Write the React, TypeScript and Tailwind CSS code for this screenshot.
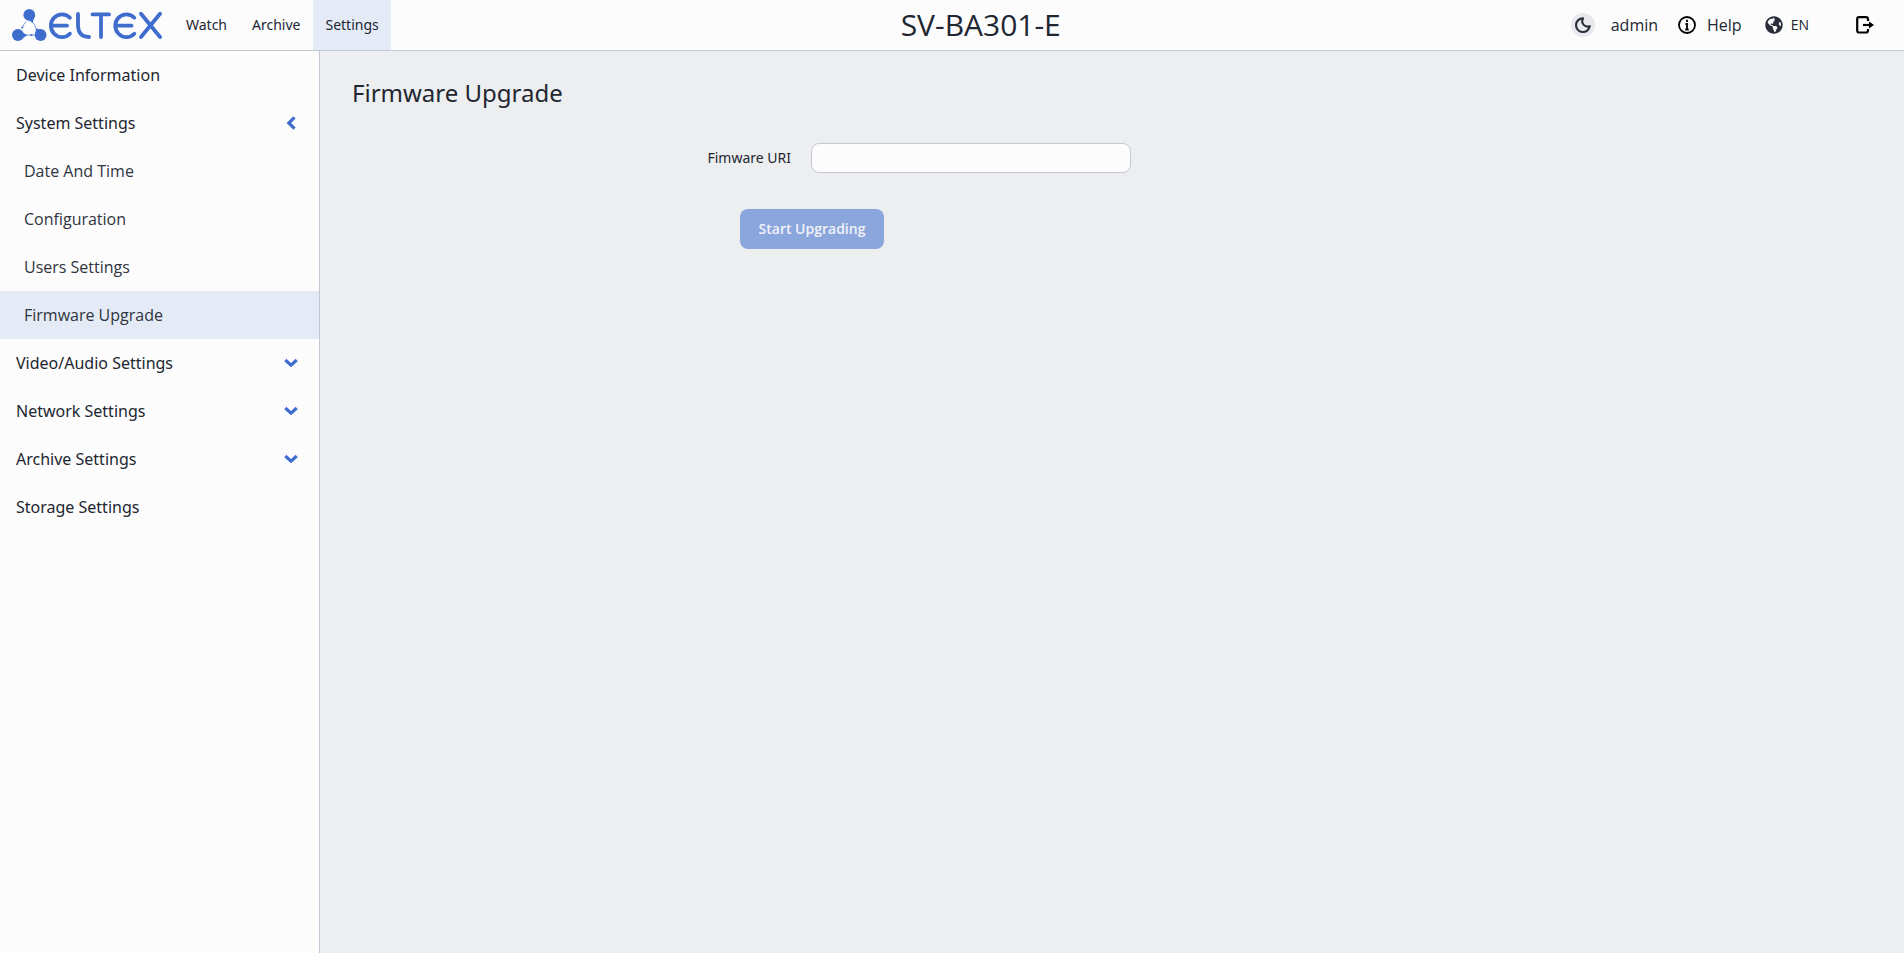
import { useState } from "react";
import { FaGlobeAmericas } from "react-icons/fa";

const topLinks = ["Watch", "Archive", "Settings"];

type Section = { label: string; children?: string[]; collapsible?: boolean };

const sections: Section[] = [
  { label: "Device Information" },
  {
    label: "System Settings",
    collapsible: true,
    children: ["Date And Time", "Configuration", "Users Settings", "Firmware Upgrade"],
  },
  { label: "Video/Audio Settings", collapsible: true },
  { label: "Network Settings", collapsible: true },
  { label: "Archive Settings", collapsible: true },
  { label: "Storage Settings" },
];

function Logo() {
  return (
    <svg width="150" height="32" viewBox="0 0 150 32" fill="none" aria-label="Eltex" role="img">
      <g fill="#3e6dce">
        <circle cx="17.300" cy="5.900" r="5.900" />
        <circle cx="5.900" cy="26" r="5.900" />
        <circle cx="28.600" cy="26" r="5.900" />
        <path d="M14 10.500Q18.500 11.300 20.800 14.300Q20.800 11.500 22.500 8.500Z" />
        <path d="M9.500 21.500Q11.500 25.200 16.500 26Q13 26.800 10 30Z" />
        <path d="M31 20.800Q26.500 21.300 23.600 18.800Q24.500 22.500 23.200 26Z" />
        <circle cx="10.200" cy="18.600" r="1" />
        <circle cx="19.500" cy="26" r="1.100" />
      </g>
      <path d="M14.300 12.500Q11.500 15 10.500 18.500M21.200 13.700Q23 16 23.700 19M16 26H23.500" stroke="#3e6dce" strokeWidth="0.700" />
      <g stroke="#3e6dce" strokeWidth="3.800" strokeLinecap="round" strokeLinejoin="round">
        <path d="M57.900 8.700A11.100 11.400 0 1 0 57.900 24.700M41 16.700H55" />
        <path d="M66 5V17Q66.500 27.800 77 28" />
        <path d="M80.500 5.400H97M89 5.400V28" />
        <path d="M122.300 8.700A11.100 11.400 0 1 0 122.300 24.700M105.500 16.700H119.500" />
        <path d="M129 4.800L148 28M148 4.800L129 28" />
      </g>
    </svg>
  );
}

function MoonIcon() {
  return (
    <svg width="18" height="18" viewBox="0 0 24 24" fill="none" stroke="#2a2e3a" strokeWidth="2.800" strokeLinejoin="round" aria-hidden="true">
      <path d="M12 3A9.200 9.200 0 1 0 21 13.500C15 16 8.500 10 12 3Z" />
    </svg>
  );
}

function InfoIcon() {
  return (
    <svg width="18" height="18" viewBox="0 0 18 18" fill="none" stroke="#000" aria-hidden="true">
      <circle cx="9" cy="9" r="8" strokeWidth="1.800" />
      <path d="M9 3.800V6M7.500 8H9V13.500M7.300 13.500H10.700" strokeWidth="1.800" />
    </svg>
  );
}

function LogoutIcon() {
  return (
    <svg width="18" height="18" viewBox="0 0 18 18" fill="none" stroke="#000" aria-hidden="true">
      <path d="M12 5V3Q12 1.200 10 1.200H3Q1.200 1.200 1.200 3V14.500Q1.200 16.500 3 16.500H10Q12 16.500 12 14.500V13" strokeWidth="2.200" />
      <path d="M7 9H14" strokeWidth="2.200" />
      <path d="M13 5.500L18 9L13 12.500Z" fill="#000" stroke="none" />
    </svg>
  );
}

function Chevron({ open }: { open: boolean }) {
  return (
    <svg width="14" height="14" viewBox="0 0 14 14" fill="none" stroke="#3e6dce" strokeWidth="3.200" aria-hidden="true">
      {open ? <path d="M10.500 1.300L4.800 7L10.500 12.700" /> : <path d="M1.300 4L7 9.200L12.700 4" />}
    </svg>
  );
}

export default function App() {
  const [uri, setUri] = useState("");
  const [openSection, setOpenSection] = useState("System Settings");

  return (
    <div className="flex min-h-screen flex-col bg-[#edeef0] font-['Open_Sans',sans-serif] text-base text-[#212630]">
      <header className="flex h-[51px] justify-between border-b border-[#c4c8d4] bg-[#fcfcfc]">
        <div className="flex items-center pl-3">
          <a href="#home" className="mr-3">
            <Logo />
          </a>
          <nav className="flex gap-px self-stretch font-['Noto_Sans',sans-serif] text-sm">
            {topLinks.map((link) => (
              <a
                key={link}
                href={`#${link.toLowerCase()}`}
                className={link === "Settings" ? "flex items-center bg-[#e4ebf6] px-3" : "flex items-center px-3"}
              >
                {link}
              </a>
            ))}
          </nav>
        </div>
        <div className="flex items-center text-3xl">SV-BA301-E</div>
        <div className="flex items-center pr-[30px]">
          <button type="button" aria-label="Dark theme" className="mr-4 flex size-6 items-center justify-center rounded-full bg-[#e8e9ee]">
            <MoonIcon />
          </button>
          <span className="mr-5">admin</span>
          <a href="#help" className="mr-[23px] flex items-center gap-[11px]">
            <InfoIcon />
            Help
          </a>
          <button type="button" className="mr-[47px] flex items-center gap-2 text-sm">
            <FaGlobeAmericas size={18} color="#2a2e3a" />
            EN
          </button>
          <button type="button" aria-label="Log out">
            <LogoutIcon />
          </button>
        </div>
      </header>
      <div className="flex flex-1">
        <aside className="w-[320px] shrink-0 border-r border-[#c4c8d4] bg-[#fcfcfc]">
          {sections.map((section) => {
            const open = openSection === section.label;
            return (
              <div key={section.label}>
                {section.collapsible ? (
                  <button
                    type="button"
                    aria-expanded={open}
                    onClick={() => setOpenSection(open ? "" : section.label)}
                    className="flex h-12 w-full items-center justify-between pr-[21px] pl-4 font-['Noto_Sans',sans-serif]"
                  >
                    {section.label}
                    <Chevron open={open} />
                  </button>
                ) : (
                  <a href="#section" className="flex h-12 items-center px-4 font-['Noto_Sans',sans-serif]">
                    {section.label}
                  </a>
                )}
                {open &&
                  section.children?.map((child) => (
                    <a
                      key={child}
                      href="#page"
                      className={
                        child === "Firmware Upgrade"
                          ? "flex h-12 items-center bg-[#e4ebf6] pl-6 text-[#303440]"
                          : "flex h-12 items-center pl-6 text-[#303440]"
                      }
                    >
                      {child}
                    </a>
                  ))}
              </div>
            );
          })}
        </aside>
        <main className="flex-1 pt-6 pl-8">
          <h1 className="font-['Noto_Sans',sans-serif] text-2xl leading-9">Firmware Upgrade</h1>
          <form className="mt-8 flex max-w-[920px] flex-col items-center gap-9" onSubmit={(e) => e.preventDefault()}>
            <div className="grid w-full grid-cols-[459px_1fr] items-center">
              <label htmlFor="uri" className="pr-5 text-right font-['Noto_Sans',sans-serif] text-sm">
                Fimware URI
              </label>
              <input
                id="uri"
                type="text"
                value={uri}
                onChange={(e) => setUri(e.target.value)}
                className="h-[30px] w-80 rounded-lg border border-[#c4c8d4] bg-[#fcfcfc] px-2 text-sm"
              />
            </div>
            <button
              type="submit"
              disabled={!uri}
              className="h-10 w-36 rounded-lg bg-[#3e6dce] text-sm font-semibold text-white disabled:bg-[#8ba6dd] disabled:text-[#f0f2f8]"
            >
              Start Upgrading
            </button>
          </form>
        </main>
      </div>
    </div>
  );
}
